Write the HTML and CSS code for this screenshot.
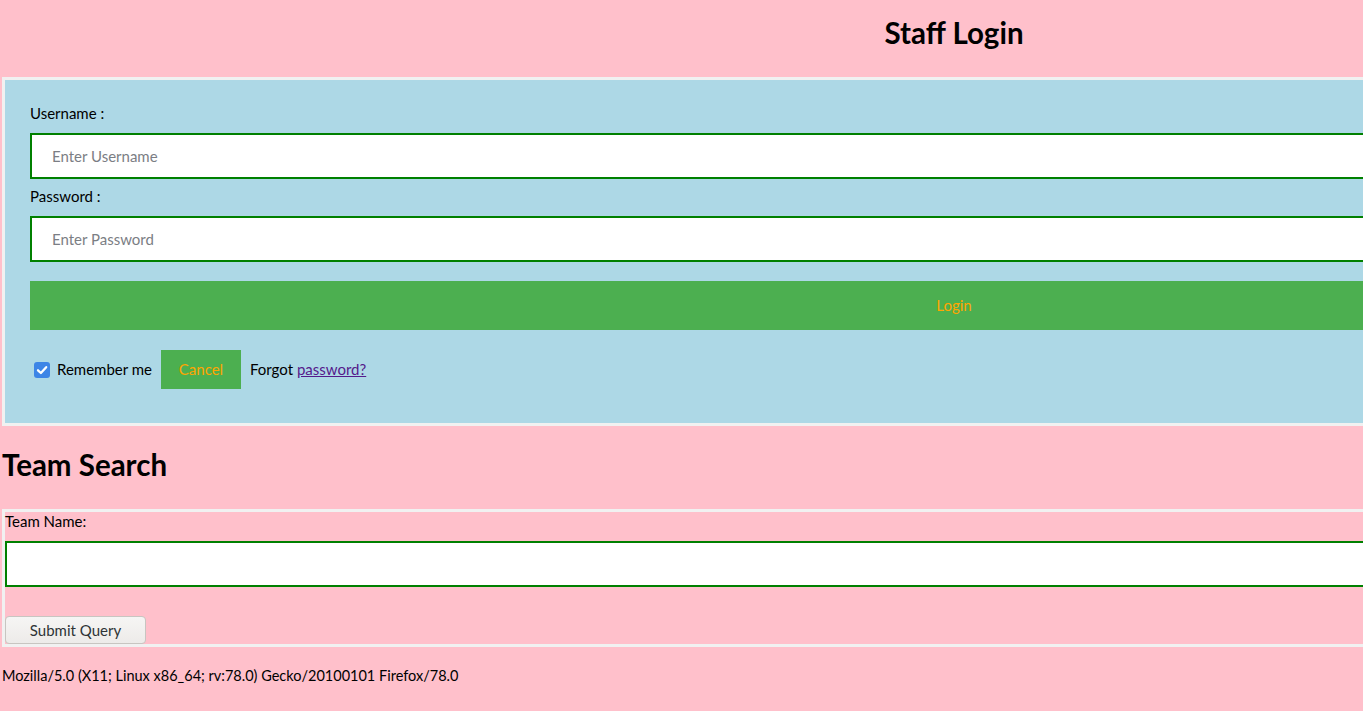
FILE: index.html
```html
<!DOCTYPE html>
<html lang="en">
<head>
<meta charset="utf-8">
<title>Staff Login</title>
<link rel="stylesheet" href="styles.css">
</head>
<body>
<div class="page">
  <h1 class="title">Staff Login</h1>
  <form class="login-form">
    <div class="container">
      <label class="field-label" for="uname">Username :</label>
      <input class="text-input" id="uname" type="text" placeholder="Enter Username">
      <label class="field-label" for="psw">Password :</label>
      <input class="text-input" id="psw" type="password" placeholder="Enter Password">
      <button class="login-btn" type="button">Login</button>
      <div class="options-row">
        <span class="check-box" aria-hidden="true">
          <svg viewBox="0 0 16 16" width="16" height="16"><path d="M4 8.3 L6.9 11 L12.2 5.2" fill="none" stroke="#fff" stroke-width="2.3" stroke-linecap="round" stroke-linejoin="round"/></svg>
        </span>
        <span class="remember">Remember me</span>
        <button class="cancel-btn" type="button">Cancel</button>
        <span class="forgot">Forgot <a class="forgot-link" href="#">password?</a></span>
      </div>
    </div>
  </form>
  <h1 class="section-title">Team Search</h1>
  <form class="search-form">
    <label class="team-label" for="tname">Team Name:</label>
    <input class="team-input" id="tname" type="text">
    <button class="submit-btn" type="button">Submit Query</button>
  </form>
  <p class="agent">Mozilla/5.0 (X11; Linux x86_64; rv:78.0) Gecko/20100101 Firefox/78.0</p>
</div>
</body>
</html>
```
FILE: styles.css
```css
html {
  overflow: hidden;
  background: pink;
}
body {
  margin: 0;
  background: pink;
  font-family: Lato, "Liberation Sans", sans-serif;
  font-size: 15px;
  color: #000;
}
.page {
  width: 1904px;
  margin-left: 2px;
}
.title {
  margin: 0 0 25px;
  padding-top: 14px;
  font-size: 29.5px;
  line-height: 38px;
  font-weight: 700;
  text-align: center;
}
.login-form {
  border: 3px solid #f1f1f1;
}
.container {
  background: lightblue;
  padding: 24px 25px 34px;
}
.field-label {
  display: block;
  line-height: 19px;
}
.text-input {
  display: block;
  width: 100%;
  box-sizing: border-box;
  height: 46px;
  margin: 10px 0 8px;
  padding: 12px 20px;
  border: 2px solid green;
  font-family: Lato, "Liberation Sans", sans-serif;
  font-size: 15px;
  background: #fff;
  outline: none;
}
.text-input::placeholder {
  color: #7b7e84;
  opacity: 1;
}
.login-btn {
  display: block;
  width: 100%;
  height: 49px;
  margin-top: 19px;
  padding: 0 20px;
  border: 0;
  background: #4caf50;
  color: orange;
  font-family: Lato, "Liberation Sans", sans-serif;
  font-size: 15px;
  line-height: 19px;
  text-align: center;
}
.options-row {
  display: flex;
  align-items: center;
  margin-top: 20px;
  line-height: 19px;
}
.check-box {
  display: inline-flex;
  width: 16px;
  height: 16px;
  margin: 0 7px 0 4px;
  border-radius: 3px;
  background: #3d85e6;
}
.cancel-btn {
  width: 80px;
  height: 39px;
  margin-left: 9px;
  padding: 0;
  border: 0;
  background: #4caf50;
  color: orange;
  font-family: Lato, "Liberation Sans", sans-serif;
  font-size: 15px;
  line-height: 19px;
}
.forgot {
  margin-left: 9px;
}
.forgot-link {
  color: #551a8b;
  text-decoration: underline;
}
.section-title {
  margin: 20px 0 25px;
  font-size: 29.5px;
  line-height: 38px;
  font-weight: 700;
}
.search-form {
  border: 3px solid #f1f1f1;
}
.team-label {
  display: block;
  line-height: 19px;
}
.team-input {
  display: block;
  width: 100%;
  box-sizing: border-box;
  height: 46px;
  margin: 10px 0 0;
  padding: 12px 20px;
  border: 2px solid green;
  background: #fff;
  font-family: Lato, "Liberation Sans", sans-serif;
  font-size: 15px;
  outline: none;
}
.submit-btn {
  display: block;
  width: 141px;
  height: 28px;
  margin-top: 29px;
  padding: 0;
  border: 1px solid #c8c5c1;
  border-radius: 4px;
  background: linear-gradient(#f6f5f4, #edebe9);
  color: #2e3436;
  font-family: Lato, "Liberation Sans", sans-serif;
  font-size: 15px;
  line-height: 19px;
}
.agent {
  margin: 19px 0 0;
  font-size: 14.5px;
  line-height: 19px;
}
```
